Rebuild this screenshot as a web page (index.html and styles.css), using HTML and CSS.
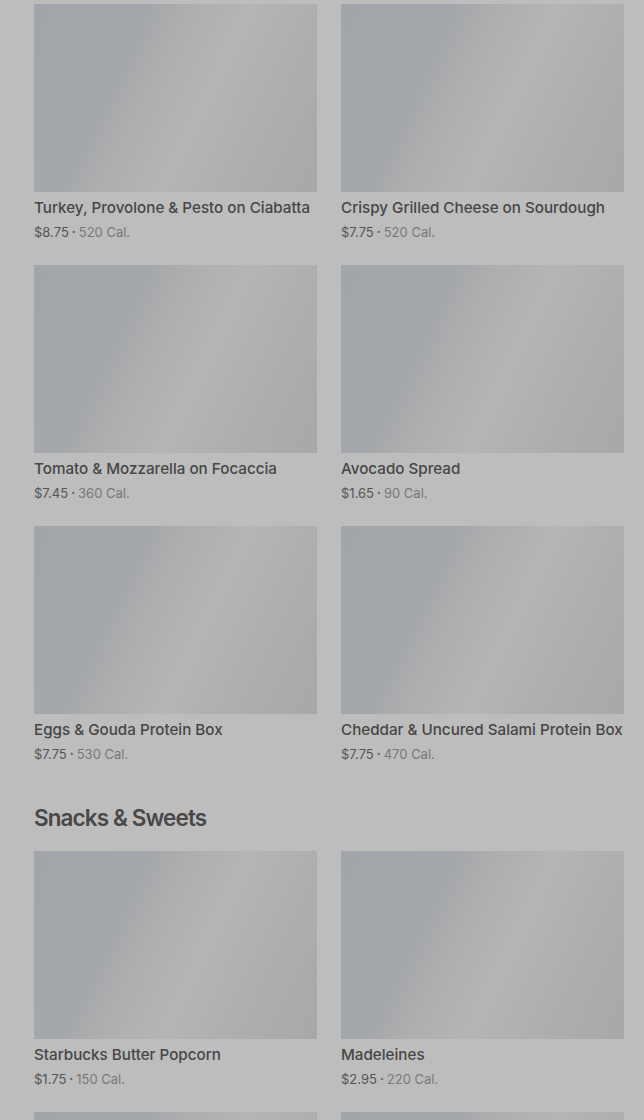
FILE: index.html
```html
<!DOCTYPE html>
<html>
<head>
<meta charset="utf-8">
<link rel="stylesheet" href="styles.css">
</head>
<body>
<main class="page">
  <section class="grid">
    <article class="item"><div class="thumb"></div><h3 class="name">Turkey, Provolone &amp; Pesto on Ciabatta</h3><p class="meta"><span class="price">$8.75</span><span class="dot">•</span><span class="cal">520 Cal.</span></p></article>
    <article class="item"><div class="thumb"></div><h3 class="name">Crispy Grilled Cheese on Sourdough</h3><p class="meta"><span class="price">$7.75</span><span class="dot">•</span><span class="cal">520 Cal.</span></p></article>
    <article class="item"><div class="thumb"></div><h3 class="name">Tomato &amp; Mozzarella on Focaccia</h3><p class="meta"><span class="price">$7.45</span><span class="dot">•</span><span class="cal">360 Cal.</span></p></article>
    <article class="item"><div class="thumb"></div><h3 class="name">Avocado Spread</h3><p class="meta"><span class="price">$1.65</span><span class="dot">•</span><span class="cal">90 Cal.</span></p></article>
    <article class="item"><div class="thumb"></div><h3 class="name">Eggs &amp; Gouda Protein Box</h3><p class="meta"><span class="price">$7.75</span><span class="dot">•</span><span class="cal">530 Cal.</span></p></article>
    <article class="item"><div class="thumb"></div><h3 class="name">Cheddar &amp; Uncured Salami Protein Box</h3><p class="meta"><span class="price">$7.75</span><span class="dot">•</span><span class="cal">470 Cal.</span></p></article>
  </section>
  <h2 class="section-title">Snacks &amp; Sweets</h2>
  <section class="grid">
    <article class="item"><div class="thumb"></div><h3 class="name">Starbucks Butter Popcorn</h3><p class="meta"><span class="price">$1.75</span><span class="dot">•</span><span class="cal">150 Cal.</span></p></article>
    <article class="item"><div class="thumb"></div><h3 class="name">Madeleines</h3><p class="meta"><span class="price">$2.95</span><span class="dot">•</span><span class="cal">220 Cal.</span></p></article>
    <article class="item"><div class="thumb"></div><h3 class="name">&nbsp;</h3><p class="meta">&nbsp;</p></article>
    <article class="item"><div class="thumb"></div><h3 class="name">&nbsp;</h3><p class="meta">&nbsp;</p></article>
  </section>
</main>
</body>
</html>
```
FILE: styles.css
```css
html, body {
  margin: 0;
  padding: 0;
  background: #bdbdbd;
  overflow: hidden;
}
body {
  font-family: Inter, "Liberation Sans", sans-serif;
  color: #4a4a4a;
}
.page {
  padding: 4px 20px 0 34px;
}
.grid {
  display: grid;
  grid-template-columns: 283px 283px;
  column-gap: 24px;
  row-gap: 23px;
}
.item {
  margin: 0;
}
.thumb {
  height: 188px;
  background: linear-gradient(116deg, #a2a5a9 0%, #a3a6aa 30%, #aeaeae 42%, #b5b5b5 58%, #adadad 80%, #a8a8a8 100%);
}
.name {
  margin: 4px 0 0;
  font-size: 15.2px;
  line-height: 24px;
  font-weight: 500;
  color: #464646;
  white-space: nowrap;
}
.meta {
  margin: 2px 0 0;
  font-size: 13px;
  line-height: 20px;
  display: flex;
  align-items: center;
}
.price {
  color: #555;
}
.dot {
  font-size: 7px;
  margin: 0 3px;
  color: #666;
}
.cal {
  color: #787878;
}
.section-title {
  margin: 38px 0 17px;
  font-size: 22.5px;
  line-height: 32px;
  font-weight: 600;
  letter-spacing: -0.9px;
  color: #484848;
}
```
